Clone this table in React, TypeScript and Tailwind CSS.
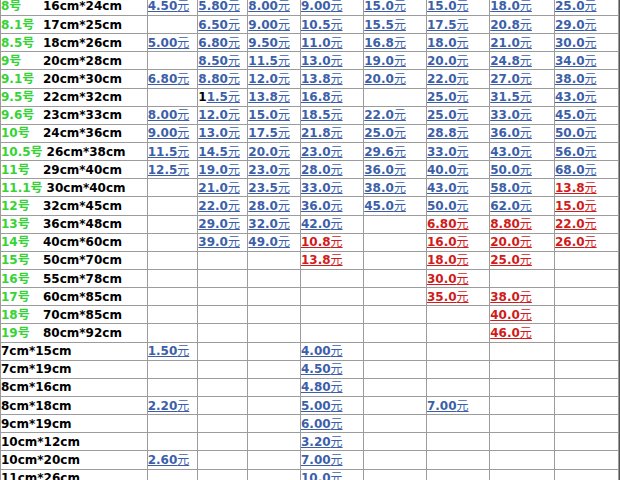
type Row = [string, string, string[]];

// '!' prefix = red price, '' = empty cell, '1|1.5' = stray black digit before link
const rows: Row[] = [
  ['8号', '16cm*24cm', ['4.50', '5.80', '8.00', '9.00', '15.0', '15.0', '18.0', '25.0']],
  ['8.1号', '17cm*25cm', ['', '6.50', '9.00', '10.5', '15.5', '17.5', '20.8', '29.0']],
  ['8.5号', '18cm*26cm', ['5.00', '6.80', '9.50', '11.0', '16.8', '18.0', '21.0', '30.0']],
  ['9号', '20cm*28cm', ['', '8.50', '11.5', '13.0', '19.0', '20.0', '24.8', '34.0']],
  ['9.1号', '20cm*30cm', ['6.80', '8.80', '12.0', '13.8', '20.0', '22.0', '27.0', '38.0']],
  ['9.5号', '22cm*32cm', ['', '1|1.5', '13.8', '16.8', '', '25.0', '31.5', '43.0']],
  ['9.6号', '23cm*33cm', ['8.00', '12.0', '15.0', '18.5', '22.0', '25.0', '33.0', '45.0']],
  ['10号', '24cm*36cm', ['9.00', '13.0', '17.5', '21.8', '25.0', '28.8', '36.0', '50.0']],
  ['10.5号', '26cm*38cm', ['11.5', '14.5', '20.0', '23.0', '29.6', '33.0', '43.0', '56.0']],
  ['11号', '29cm*40cm', ['12.5', '19.0', '23.0', '28.0', '36.0', '40.0', '50.0', '68.0']],
  ['11.1号', '30cm*40cm', ['', '21.0', '23.5', '33.0', '38.0', '43.0', '58.0', '!13.8']],
  ['12号', '32cm*45cm', ['', '22.0', '28.0', '36.0', '45.0', '50.0', '62.0', '!15.0']],
  ['13号', '36cm*48cm', ['', '29.0', '32.0', '42.0', '', '!6.80', '!8.80', '!22.0']],
  ['14号', '40cm*60cm', ['', '39.0', '49.0', '!10.8', '', '!16.0', '!20.0', '!26.0']],
  ['15号', '50cm*70cm', ['', '', '', '!13.8', '', '!18.0', '!25.0', '']],
  ['16号', '55cm*78cm', ['', '', '', '', '', '!30.0', '', '']],
  ['17号', '60cm*85cm', ['', '', '', '', '', '!35.0', '!38.0', '']],
  ['18号', '70cm*85cm', ['', '', '', '', '', '', '!40.0', '']],
  ['19号', '80cm*92cm', ['', '', '', '', '', '', '!46.0', '']],
  ['', '7cm*15cm', ['1.50', '', '', '4.00', '', '', '', '']],
  ['', '7cm*19cm', ['', '', '', '4.50', '', '', '', '']],
  ['', '8cm*16cm', ['', '', '', '4.80', '', '', '', '']],
  ['', '8cm*18cm', ['2.20', '', '', '5.00', '', '7.00', '', '']],
  ['', '9cm*19cm', ['', '', '', '6.00', '', '', '', '']],
  ['', '10cm*12cm', ['', '', '', '3.20', '', '', '', '']],
  ['', '10cm*20cm', ['2.60', '', '', '7.00', '', '', '', '']],
  ['', '11cm*26cm', ['', '', '', '10.0', '', '', '', '']],
];

function Price({ value }: { value: string }) {
  if (!value) return null;
  let lead = '';
  let v = value;
  if (v.includes('|')) {
    [lead, v] = v.split('|');
  }
  const red = v.startsWith('!');
  if (red) v = v.slice(1);
  return (
    <>
      {lead && <span className="text-black">{lead}</span>}
      <a className={`underline ${red ? 'text-[#d01c1c]' : 'text-[#3d5fa9]'}`}>
        {v}
        <span className="font-normal">元</span>
      </a>
    </>
  );
}

export default function App() {
  return (
    <div className="w-[620px] h-[480px] overflow-hidden bg-white">
      <div className="-mt-[2.15px] grid grid-cols-[145.7px_49.6px_49px_51.7px_62.3px_61.7px_62.3px_63.7px_63px] auto-rows-[17.15px] gap-px bg-[#9c9c9c] pl-px border-r border-[#555] font-[family-name:'DejaVu_Sans','Noto_Sans_CJK_SC',sans-serif] text-[12px] font-bold leading-none">
        {rows.map(([num, size, prices], i) => (
          <div key={i} className="contents">
            <div className="bg-white flex items-center whitespace-nowrap overflow-hidden">
              {num && <span className="min-w-[38px] mr-[4px] text-[#36d236]">{num}</span>}
              <span className="text-black">{size}</span>
            </div>
            {prices.map((p, j) => (
              <div key={j} className="bg-white flex items-center whitespace-nowrap overflow-hidden">
                <Price value={p} />
              </div>
            ))}
          </div>
        ))}
      </div>
    </div>
  );
}
